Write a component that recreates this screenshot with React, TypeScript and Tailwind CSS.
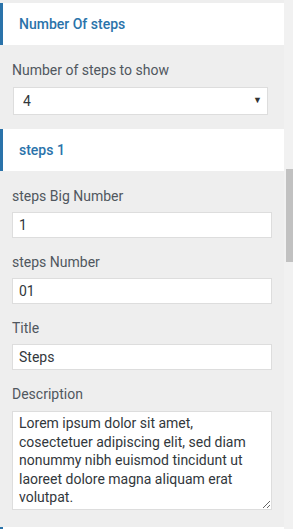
import { useState } from 'react'

function PanelHeader({ title }: { title?: string }) {
  return (
    <div className="h-[42px] shrink-0 bg-white border-l-[3px] border-[#2a73aa] pl-[16px] flex items-center text-[14px] font-medium text-[#2a73aa]">
      {title}
    </div>
  )
}

function Field({ label, value, onChange }: { label: string; value: string; onChange: (v: string) => void }) {
  return (
    <div className="flex flex-col">
      <label className="text-[14px] leading-[20px] text-[#50575e]">{label}</label>
      <input
        type="text"
        value={value}
        onChange={(e) => onChange(e.target.value)}
        className="mt-[6px] h-[26px] w-[260px] bg-white border border-[#dddddd] px-[6px] text-[14px] text-[#32373c] outline-none"
      />
    </div>
  )
}

export default function App() {
  const [count, setCount] = useState('4')
  const [bigNumber, setBigNumber] = useState('1')
  const [stepNumber, setStepNumber] = useState('01')
  const [title, setTitle] = useState('Steps')
  const [description, setDescription] = useState(
    'Lorem ipsum dolor sit amet, cosectetuer adipiscing elit, sed diam nonummy nibh euismod tincidunt ut laoreet dolore magna aliquam erat volutpat.'
  )

  return (
    <div className="flex h-[529px] w-[293px] overflow-hidden bg-[#eeeeee] font-['Roboto',sans-serif]">
      <div className="w-[284px] shrink-0 pt-[3px]">

        {/* Number of steps */}
        <PanelHeader title="Number Of steps" />
        <div className="px-[12px] pt-[15px] pb-[14px]">
          <div className="text-[14px] leading-[20px] text-[#50575e]">Number of steps to show</div>
          <div className="relative mt-[7px] ml-[1px] w-[255px] h-[28px]">
            <select
              value={count}
              onChange={(e) => setCount(e.target.value)}
              className="appearance-none w-full h-full bg-white border border-[#dddddd] pl-[9px] text-[14px] text-[#32373c] outline-none"
            >
              {['1', '2', '3', '4', '5', '6'].map((n) => (
                <option key={n} value={n}>{n}</option>
              ))}
            </select>
            <span className="pointer-events-none absolute right-[6px] top-[7px] text-[9px] text-[#333333]">▼</span>
          </div>
        </div>

        {/* steps 1 */}
        <PanelHeader title="steps 1" />
        <div className="px-[12px] pt-[15px] flex flex-col gap-[14px]">
          <Field label="steps Big Number" value={bigNumber} onChange={setBigNumber} />
          <Field label="steps Number" value={stepNumber} onChange={setStepNumber} />
          <Field label="Title" value={title} onChange={setTitle} />
          <div className="flex flex-col">
            <label className="text-[14px] leading-[20px] text-[#50575e]">Description</label>
            <textarea
              value={description}
              onChange={(e) => setDescription(e.target.value)}
              className="mt-[7px] h-[99px] w-[260px] shrink-0 bg-white border border-[#dddddd] px-[6px] pt-[2px] text-[14px] leading-[18.6px] text-[#32373c] outline-none"
            />
          </div>
        </div>

        {/* next panel, only its top edge is in view */}
        <div className="mt-[17px]">
          <PanelHeader />
        </div>
      </div>

      {/* scrollbar */}
      <div className="w-[9px] shrink-0 flex flex-col items-end bg-[#f1f1f1]">
        <div className="mt-[169px] h-[93px] w-[7px] bg-[#c1c1c1]"></div>
      </div>
    </div>
  )
}
